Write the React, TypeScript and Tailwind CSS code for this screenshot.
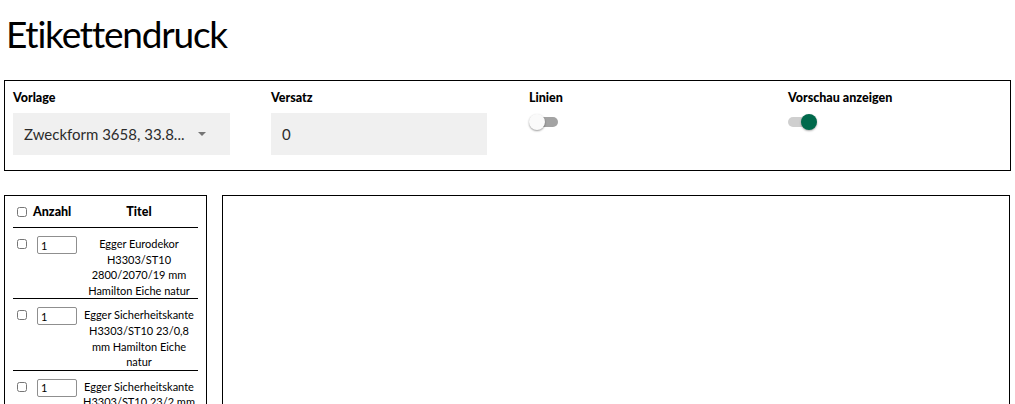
import { useState } from 'react';

type Item = {
  id: number;
  anzahl: number;
  titel: string;
};

const items: Item[] = [
  { id: 1, anzahl: 1, titel: 'Egger Eurodekor H3303/ST10 2800/2070/19 mm Hamilton Eiche natur' },
  { id: 2, anzahl: 1, titel: 'Egger Sicherheitskante H3303/ST10 23/0,8 mm Hamilton Eiche natur' },
  { id: 3, anzahl: 1, titel: 'Egger Sicherheitskante H3303/ST10 23/2 mm Hamilton Eiche natur' },
];

function Switch({ checked, onChange }: { checked: boolean; onChange: (v: boolean) => void }) {
  return (
    <button
      type="button"
      onClick={() => onChange(!checked)}
      className="relative mt-[8px] block h-[16px] w-[30px]"
    >
      <span
        className={
          checked
            ? 'absolute top-[3px] left-[0px] h-[10px] w-[28px] rounded-full bg-[#cfcfcf]'
            : 'absolute top-[3px] left-[2px] h-[10px] w-[27px] rounded-full bg-[#a3a3a3]'
        }
      />
      <span
        className={
          checked
            ? 'absolute top-0 left-[13px] h-[16px] w-[16px] rounded-full bg-[#00694b] shadow-[0_1px_2px_rgba(0,0,0,0.35)]'
            : 'absolute top-0 left-0 h-[16px] w-[16px] rounded-full bg-[#fafafa] shadow-[0_1px_2px_rgba(0,0,0,0.4)]'
        }
      />
    </button>
  );
}

export default function App() {
  const [linien, setLinien] = useState(false);
  const [vorschau, setVorschau] = useState(true);

  return (
    <div className="min-h-[404px] bg-white px-1 font-['Lato','Open_Sans',sans-serif] text-black">
      <h1 className="pt-[10px] pl-[2px] text-[37px] leading-[48px] font-normal tracking-[-1.2px]">Etikettendruck</h1>

      <div className="mt-[22px] grid h-[91px] w-[1007px] grid-cols-[258px_258px_259px_1fr] border border-black px-2 pt-[9px]">
        <div>
          <div className="text-[12.5px] leading-[16px] font-black">Vorlage</div>
          <div className="mt-[7px] flex h-[42px] w-[217px] items-center justify-between bg-[#f0f0f0] pr-[24px] pl-[11px] text-[15px] text-[#2b2b2b]">
            <span>Zweckform 3658, 33.8...</span>
            <span className="h-0 w-0 border-x-[4px] border-t-[4px] border-x-transparent border-t-[#757575]" />
          </div>
        </div>
        <div>
          <div className="text-[12.5px] leading-[16px] font-black">Versatz</div>
          <div className="mt-[7px] flex h-[42px] w-[216px] items-center bg-[#f0f0f0] pl-[11px] text-[15px] text-[#2b2b2b]">0</div>
        </div>
        <div>
          <div className="text-[12.5px] leading-[16px] font-black">Linien</div>
          <Switch checked={linien} onChange={setLinien} />
        </div>
        <div>
          <div className="text-[12.5px] leading-[16px] font-black">Vorschau anzeigen</div>
          <Switch checked={vorschau} onChange={setVorschau} />
        </div>
      </div>

      <div className="mt-[24px] flex gap-[15px]">
        <div className="h-[220px] w-[203px] shrink-0 overflow-hidden border border-black px-2 pt-[8px]">
          <div className="flex h-[24px] items-start border-b border-black text-[12.5px] leading-[16px] font-black">
            <div className="flex w-[67px] items-center gap-[6px] pl-[4px]">
              <input type="checkbox" className="h-[10px] w-[10px]" />
              <span>Anzahl</span>
            </div>
            <div className="flex-1 text-center">Titel</div>
          </div>
          {items.map((item) => (
            <div key={item.id} className="flex items-start border-b border-black pt-[8px] text-[11px] leading-[15.6px]">
              <div className="flex w-[67px] items-start gap-[10px] pl-[4px]">
                <input type="checkbox" className="mt-[3px] h-[10px] w-[10px]" />
                <input
                  type="text"
                  defaultValue={item.anzahl}
                  className="h-[18px] w-[40px] rounded-[2px] border border-[#8f8f8f] px-[3px] text-[11px] leading-[16px]"
                />
              </div>
              <div className="flex-1 text-center">{item.titel}</div>
            </div>
          ))}
        </div>
        <div className="h-[220px] w-[788px] border border-black" />
      </div>
    </div>
  );
}
